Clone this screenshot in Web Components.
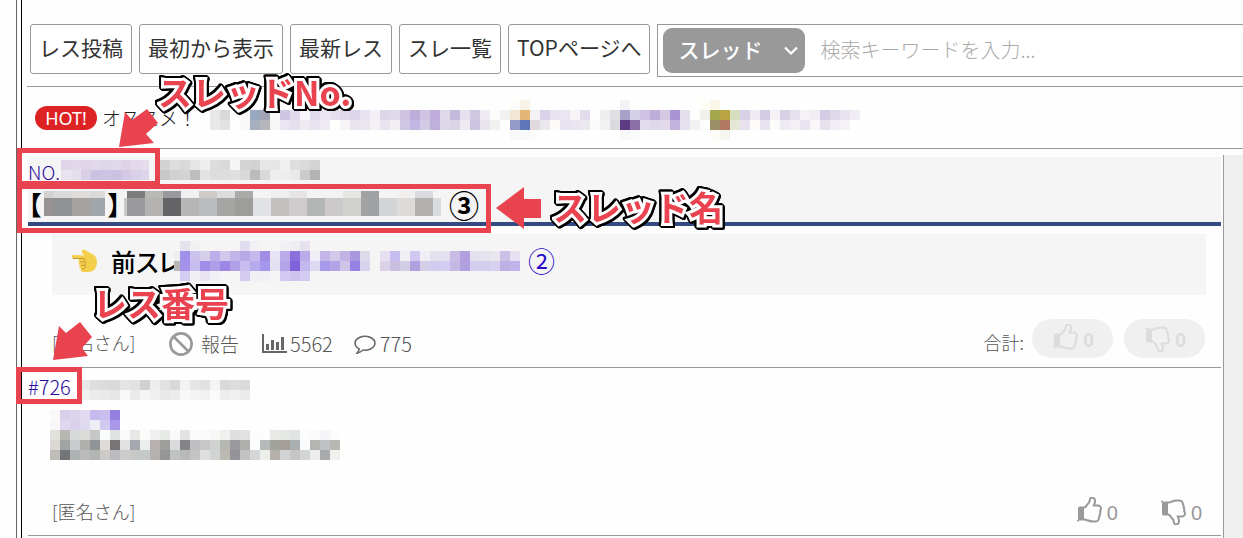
<!DOCTYPE html>
<html lang="ja">
<head>
<meta charset="utf-8">
<meta name="viewport" content="width=device-width, initial-scale=1">
<title>スレッド</title>
<style>
  body { margin: 0; background: #fefefe; color: #555; font-family: "Noto Sans CJK JP", sans-serif; font-weight: 300; }
</style>
</head>
<body>
<board-page></board-page>
<script>
const define = (name, html, setup) => {
  const template = document.createElement('template');
  template.innerHTML = html;
  customElements.define(name, class extends HTMLElement {
    connectedCallback() {
      if (this.shadowRoot) return;
      this.attachShadow({ mode: 'open' }).append(template.content.cloneNode(true));
      if (setup) setup(this, this.shadowRoot);
    }
  });
};

// Censored text: a grid of flat colour cells. Rows are split by "/", "-" is a clear cell.
define('pixel-mosaic', `<style>:host{display:block;flex:none}svg{display:block}</style><svg aria-hidden="true" shape-rendering="crispEdges"></svg>`, (host, root) => {
  const rows = host.getAttribute('cells').split('/').map(r => r.trim().split(/\s+/));
  const n = Math.max(...rows.map(r => r.length));
  const list = (a, length) => {
    const given = (host.getAttribute(a) || '').split(' ').filter(Boolean).map(Number);
    return Array.from({ length }, (_, i) => given[i] ?? 10);
  };
  const ws = list('widths', n), hs = list('heights', rows.length);
  const svg = root.querySelector('svg');
  let y = 0, out = '';
  rows.forEach((r, j) => {
    let x = 0;
    r.forEach((c, i) => {
      if (c !== '-') out += `<rect x="${x}" y="${y}" width="${ws[i]}" height="${hs[j]}" fill="#${c}"/>`;
      x += ws[i];
    });
    y += hs[j];
  });
  svg.setAttribute('width', ws.reduce((a, b) => a + b, 0));
  svg.setAttribute('height', y);
  svg.innerHTML = out;
});

const icons = {
  ban: '<svg viewBox="0 0 24 24" width="24" height="24" fill="none" stroke="#999" stroke-width="2.6"><circle cx="12" cy="12" r="10.6"/><path d="M4.5 4.5l15 15"/></svg>',
  chart: '<svg viewBox="0 0 25 20" width="25" height="20" fill="#666"><path d="M0 0h2v17h23v2H0z"/><path d="M4 10h3v6H4zM9 6h3v10H9zM14 8h3v8h-3zM19 3h3v13h-3z"/></svg>',
  comment: '<svg viewBox="0 128 1792 1664" width="22" height="20" fill="#666"><path d="M896 384q-204 0-381.5 69.5t-282 187.5-104.5 255q0 112 71.5 213.5t201.5 175.5l87 50-27 96q-24 91-70 172 152-63 275-171l43-38 57 6q69 8 130 8 204 0 381.5-69.5t282-187.5 104.5-255-104.5-255-282-187.5-381.5-69.5zm896 512q0 174-120 321.5t-326 233-450 85.5q-70 0-145-8-198 175-460 242-49 14-114 22h-5q-15 0-27-10.5t-16-27.5v-1q-3-4-.5-12t2-10 4.5-9.5l6-9 7-8.5 8-9q7-8 31-34.5t34.5-38 31-39.5 32.5-51 27-59 26-76q-157-89-247.5-220t-90.5-281q0-174 120-321.5t326-233 450-85.5 450 85.5 326 233 120 321.5z"/></svg>',
  thumb: '<svg viewBox="64 0 1728 1792" width="27" height="28" fill="currentColor"><path d="M256 1344q0-26-19-45t-45-19-45 19-19 45 19 45 45 19 45-19 19-45zm1344-768q0-51-39-89.500t-89-38.500h-352q0-58 48-159.500t48-160.500q0-98-32-145t-128-47q-26 26-38 85t-30.500 125.500-59.500 109.500q-22 23-77 91-4 5-23 30t-31.500 41-34.500 42.500-40 44-38.500 35.500-40 27-35.500 9h-32v640h32q13 0 31.500 3t33 6.500 38 11 35 11.500 35.500 12.500 29 10.500q211 73 342 73h121q192 0 192-167 0-26-5-56 30-16 47.500-52.500t17.500-73.500-18-69q53-50 53-119 0-25-10-55.500t-25-47.500q32-1 53.500-47t21.500-81zm128-1q0 89-49 163 9 33 9 69 0 77-38 144 3 21 3 43 0 101-60 178 1 139-85 219.500t-227 80.500h-129q-96 0-189.500-22.500t-216.500-65.500q-116-40-138-40h-288q-53 0-90.500-37.500t-37.500-90.500v-640q0-53 37.500-90.500t90.500-37.500h274q36-24 137-155 58-75 107-128 24-25 35.500-85.500t30.500-126.500 62-108q39-37 90-37 84 0 151 32.500t102 101.500 35 186q0 93-48 192h176q104 0 180 76t76 179z" fill-rule="evenodd" transform="translate(64 160)"/></svg>',
  hand: '<svg viewBox="0 0 28 26" width="28" height="26"><path d="M2 9.500Q1 7 4 7L14 7.500 12 5Q11 1.500 14 1.500L20 5Q27 7 27 14 27 24 17 24L13 24Q10 23.500 11 21 8.500 20 10 17.500 8 16.500 9 14 8 12 9.500 10.800L3.500 10.500Q2.300 10.500 2 9.500Z" fill="#f3cf4c"/><path d="M3 10.500H14Q16 12 14 13.500M10 14H15Q17 15.500 14.500 17M11 17.500H15Q16.500 19 14.500 20.500M12 21H15" fill="none" stroke="#c99a3b" stroke-width="1"/></svg>',
  chevron: '<svg viewBox="0 0 14 10" width="14" height="10" fill="none" stroke="#fff" stroke-width="2.200"><path d="M1 1.500l6 6 6-6"/></svg>'
};
define('ui-icon', '<style>:host{display:block;flex:none}:host([flip]){transform:scaleY(-1)}svg{display:block}</style>', (host, root) => {
  root.append(document.createRange().createContextualFragment(icons[host.getAttribute('name')]));
  root.querySelector('svg').setAttribute('aria-hidden', 'true');
});

define('nav-button', `<style>
  :host{display:block;flex:none}
  button{box-sizing:border-box;height:50px;padding:0 8px 4px;border:1px solid #999;border-radius:3px;background:#fff;color:#333;font:400 21px/30px "Noto Sans CJK JP",sans-serif;white-space:nowrap;display:block}
  </style><button type="button"><slot></slot></button>`);

define('search-box', `<style>
  :host{display:flex;flex:1;min-width:0;box-sizing:border-box;height:53px;padding:3px 0 3px 5px;border:1px solid #999;border-right:0;background:#fff}
  .pick{position:relative;flex:none;width:142px}
  select{appearance:none;width:100%;height:45px;border:0;border-radius:9px;background:#999;color:#fff;padding:0 15px 4px;font:500 21px/30px "Noto Sans CJK JP",sans-serif;display:block}
  ui-icon{position:absolute;right:7px;top:18px;pointer-events:none}
  input{flex:1;min-width:0;border:0;background:none;padding:0 15px 2px;font:300 20px/30px "Noto Sans CJK JP",sans-serif;color:#333;outline:0}
  input::placeholder{color:#aaa;opacity:1}
  </style>
  <div class="pick"><select aria-label="検索対象"><option>スレッド</option></select><ui-icon name="chevron"></ui-icon></div>
  <input type="text" aria-label="検索キーワード" placeholder="検索キーワードを入力...">`);

define('tool-bar', `<style>
  :host{display:flex;align-items:flex-start;gap:7px;padding:24px 0 9px 3px;border-bottom:1px solid #999}
  nav{display:flex;gap:7px}</style>
  <nav><nav-button>レス投稿</nav-button><nav-button>最初から表示</nav-button><nav-button>最新レス</nav-button><nav-button>スレ一覧</nav-button><nav-button>TOPページへ</nav-button></nav>
  <search-box></search-box>`);

define('hot-row', `<style>
  :host{display:flex;align-items:center;height:61px;padding-left:8px;border-bottom:1px solid #999;color:#222;font-size:19px;line-height:24px}
  b{box-sizing:border-box;width:62px;text-align:center;border-radius:12px;background:#dc2222;color:#fff;font:400 18px/24px "Noto Sans",sans-serif}
  span{width:108px;margin-left:5px;white-space:nowrap}
  pixel-mosaic{margin-top:4px}
  </style><b>HOT!</b><span>オススメ！</span>
  <pixel-mosaic cells="
  - - - - - - - - - - - - - - - - - - - - - - - - - - - - - - fefcf8 f9f2e6 - - - - - - - - - f3f3f7 - - - - - - - fdfcf5 faf6e8/
  e8e8e8 d9d9d9 fcfcfc f9f9f9 98a8c0 a2a3b4 f8f8f8 cec6e5 e0daec f7f6fa dfdaec eae6f2 e4e0f0 dfd9ec ddd6ea e7e3f0 f2f0f6 ddd8e9 dfd9eb cec3e3 bcaddb cfc4e4 bfaedc ded8e9 c4b8dc e5e0ed d0c8e3 eeebf3 fcfcfc f1f1f1 f3e6d2 e4b675 f3f1f3 d8d3e9 e9e3f0 e9e5f1 f6f4f7 e2dced fefefe eeeeee e1e0e5 a7a1c7 d3d0e7 cec2e4 beacd9 d3c9e3 a894d3 e3e0eb - f0f1ec a5a74d b8a441 d5dfbd d7d0e6 eeebf3 d4cce4 f4f2f6 d8d1e6 e7e1ed f5f3f5 f1edf4 d3cce4 ddd8ea e7e3ef efecf4/
  e8e8e8 e2e2e2 - f9f9f9 a7b0bf b5b7bd f7f6f7 eae6f1 e5e0ed eeeaf2 e8e2ef efeaf2 fefefa f6f4f7 e9e4ee ebe5ef f3f1f5 e8e3ef f1eef4 d0c7e5 c3b5e2 d3cae6 beafdb ddd7e8 dbd3e6 eeeaf2 cdc4e1 e9e5ef f1f1ef fefefe 949bcb 6076b9 e2d9df ebe7ee fcfbf8 e7e2ef e9e5f0 eae7ef fafafa f3f2f2 dbdade 5d3c84 8c71a7 e3dcec dfd8e9 e2daeb c1b3db e6e1ef f2f2f3 fdfdfb 9c8e66 b17961 e5e7d5 e9e2ee fdfcfa e9e2ef fcfcf8 eeeaf3 f3f0f5 e9e4ef f8f6f9 e7e0ed f0edf4 f5f3f7 -/
  - - - - - - - - - - - - - - - - - - - - - - - - - - - - - - f7faf9 f7faf9 fdfcfc - - - - - - - - f9f8f9 fbfafb - - - - - - - fcfbf7 f7f5ef"></pixel-mosaic>`);

define('thread-head', `<style>
  :host{display:block;background:#f5f5f5;border-bottom:4px solid #354a80}
  .no,h1{display:flex;align-items:flex-start}
  .no{height:30px;padding-top:3px;box-sizing:border-box}
  a{display:flex;width:132px;color:#2b0b9e;text-decoration:none;font-size:19px;line-height:24px}
  a span{width:33px}
  h1{margin:0;height:35px;font:700 26px/34px "Noto Sans CJK JP",sans-serif;color:#000;font-feature-settings:"palt";white-space:nowrap}
  h1 pixel-mosaic{margin:4px 3px 0}
  h1 .count{margin-left:5px;font-size:30px;line-height:34px;font-feature-settings:normal}
  </style>
  <div class="no"><a href="#"><span>NO.</span><pixel-mosaic widths="10 10 10 10 10 10 10 10 8" cells="dfd7e9 e1d9eb ded5e9 e1d8ea ddd5e8 e0d8eb ddd4e8 e2daeb e5ddec/e9e2ef e5deed d8cfe7 cbc1e1 cdc3e2 cac0df d3c9e5 d9d0e7 dcd4e8"></pixel-mosaic></a>
  <pixel-mosaic cells="d3d3d3 dedede d9d9d9 e5e5e5 eeeeee dddddd dadada f5f5f5 d4d4d4 d2d2d2 e7e7e7 e6e6e6 efefef dedede dadada d4d4d4/c9c9c9 d1d1d1 d3d3d3 bebebe e3e3e3 dddddd dedede dfdfdf d9d9d9 bbbbbb d9d9d9 eeeeee ededed e9e9e9 cbcbcb b3b3b3"></pixel-mosaic></div>
  <h1><span>【</span><pixel-mosaic widths="10 18 18 15" heights="7 18" cells="d2d2d0 dbdbdc dfdedb dadada/969293 909193 a5a39f a0a6a9"></pixel-mosaic><span>】</span>
  <pixel-mosaic widths="3 18 18 18 18 18 18 18 18 18 18 18 18 18 18 18 18 18 8" heights="7 18" cells="f5f5f5 7c7c7a b8b8b7 9a9a9e f0f0f0 cecac8 dcdcdc aaaaa8 f4f4f4 eeeeee e7e4e5 f4f4f4 f3f3f3 e7e6e4 a0a1a3 f4f4f4 f1f0ef d9dade f4f4f4/c9c9c9 9b9a9d b3b2b0 646466 b7b6b7 bbbcbe a5a5a3 9d9d9c e0e2e5 c2c1bf cecccd b2b6b4 cbc9c9 d0d1cf a1a2a4 d3d4d5 dcdbda b2b1af d7dcdf"></pixel-mosaic><span class="count">③</span></h1>`);

define('previous-thread', `<style>
  :host{display:flex;align-items:center;height:61px;margin:8px 15px 0 24px;padding:0 0 8px 18px;box-sizing:border-box;background:#f5f5f5;color:#000;font-size:25px;line-height:36px;font-weight:500;white-space:nowrap}
  .label{width:63px;margin-left:13px;font-feature-settings:"palt"}
  a{display:flex;align-items:center;color:#2a0bc8;text-decoration:none;gap:8px;font-size:27px;font-weight:400}
  </style><ui-icon name="hand"></ui-icon><span class="label">前スレ</span>
  <a href="#"><pixel-mosaic widths="6" cells="
  - e5e1ef f1f1f4 - - - - e1dcef f1f0f4 - - f1f0f4 f0eef5 e6e0f0/
  eeeeee a190e9 cbc3ee d6cfec bbaeea d2c7ec c1b4e9 b8a9e5 c4b9ee a18ce6 e6e4f4 baaae8 8b6fdc baace8 f0edf7 c5b4e7 d0c9e9 c3b3e5 a998e0 dcdbea - e6e0f1 c6bdf0 f0eff4 d0c8f0 efeef5 e4e1ef e4e0ef c8bce7 b19fdf e4e1ee e6e2ee e9e6f0 cbc1e7 e5dff0/
  b7b7b7 a491e9 c7bdf0 a08eea af9ee9 9e87e4 afa0e7 c7bdee b6aaeb a398ee e3e0f2 b3a5e7 7f61d9 c4b9ee dedaf2 a79aeb b4a3e6 cec5e7 9681e5 d8d4ee - dbd1e8 cabfe1 d3cee6 b0a0de d5cee7 d2ccf1 d3cdf2 c6b8e5 b0a0e0 d5cef0 d3cdf0 d7d1ef bfb0e4 c0b2eb/
  - d5ccf1 f0f0f4 e9e4f2 f1f0f4 - - d4cbf0 f0f0f4 f0f0f4 - d3caf1 cfc3ed d4ccf0"></pixel-mosaic><span>②</span></a>`);

define('vote-button', `<style>
  :host{display:block;flex:none}
  button{display:flex;align-items:center;gap:5px;height:39px;padding:0;border:0;background:none;color:#999;font:400 20px/24px "Liberation Sans",sans-serif}
  span{padding-top:4px}
  :host([pill]) button{width:81px;padding:0 19px;border-radius:20px;background:#f0f0f0;color:#dcdcdc;font-weight:700}
  </style><button type="button"><ui-icon name="thumb"></ui-icon><span>0</span></button>`, (host, root) => {
  const down = host.hasAttribute('down');
  root.querySelector('ui-icon').toggleAttribute('flip', down);
  root.querySelector('button').setAttribute('aria-label', down ? 'よくない 0' : 'いいね 0');
});

define('post-footer', `<style>
  :host{display:flex;align-items:center;box-sizing:border-box;padding:0 16px 0 24px;border-bottom:1px solid #999;font-size:19px;line-height:24px;color:#555;white-space:nowrap}
  .name{width:117px;padding-top:var(--text-drop,0);font-size:18px}
  .votes{display:flex;align-items:center;margin-left:auto}
  </style><span class="name">[匿名さん]</span><slot></slot><div class="votes"><slot name="votes"></slot></div>`);

define('post-stats', `<style>
  :host{display:flex;align-items:center;padding-top:12px}
  a,span{display:flex;align-items:center;color:inherit;text-decoration:none}
  a{gap:8px;margin-right:23px}.views{gap:3px;margin-right:21px;font-size:20px}.replies{gap:4px;font-size:20px}
  </style><a href="#"><ui-icon name="ban"></ui-icon>報告</a><span class="views"><ui-icon name="chart"></ui-icon>5562</span><span class="replies"><ui-icon name="comment"></ui-icon>775</span>`);

define('reply-post', `<style>
  :host{display:block}
  header{display:flex;height:42px}
  a{width:52px;color:#2b0b9e;text-decoration:none;font-size:20px;line-height:38px}
  header pixel-mosaic{margin-top:12px}
  .body{margin-left:22px}
  </style><header><a href="#">#726</a>
  <pixel-mosaic cells="e8e8e8 dedede dcdcdc dadada e4e4e4 e1e1e1 d1d1d1 ededed e2e2e2 d8d8d8 f3f3f3 e5e5e5 e1e1e1 f4f4f4 d9d9d9 dddddd dadada/f0f0f0 ececec eaeaea e7e7e7 f8f8f8 ebebeb f4f4f4 efefef e9e9e9 ececec f8f8f8 f4f4f4 f1f1f1 fafafa ededed f0f0f0 ebebeb"></pixel-mosaic></header>
  <pixel-mosaic class="body" cells="
  faf8f9 d9cfeb dcd3ec e1daf0 c5b9ed c9bef0 9580df/
  f8f6f8 ded7ed d9d0eb e0daf0 ecedf5 d2c9f0 a998ea/
  e0e2dc b7b7b2 d7dad9 dbdcd8 c5c8c7 fafcfb e0e3e2 fafafa e6e8e5 fbfbfa f0eff0 e7eae5 f9faf9 e2e4e3 fafafa fafafa f7f7f6 f0f1ef dedfde e0e1e0 fcfcfc fdfdfd e8e9e4 e6e8e3 dfe4e2 fbfcfc fafafa f5f5f7 fcfcfb/
  dcd8d3 a0a4a3 c8ccce b0b0ae 909598 dedbd8 777475 e1e1e1 a6a8af ededed b6b1b0 9e9e9d d9dcda 858589 bfbfc1 c7c7c8 d0d3d1 b4b7b2 9b9a9c b0b1ae fcfcfc b5b9b7 a2a39c a39e97 aab0b1 fafcfb b4b5b0 c0c1c5 b7b7b3/
  c0bdb8 747578 adb3b2 bababa b3b5b2 cdc9c7 babbbe cecbcb c7c9c9 c3c8c8 b5b1af 969697 bfc3c3 b8bab8 c3c5c2 e1dfdd d0d4d2 bcb8b2 939399 c1c3c2 d4d6d7 eceeea b6b1aa d1d3d4 c8c6c3 d2d7d4 eceeed a9aaab f0f0ec"></pixel-mosaic>
  <slot></slot>`);

define('callout-label', `<style>
  :host{position:absolute;color:#e8434f;font-size:34px;line-height:40px;font-weight:700;white-space:nowrap;-webkit-text-stroke:6px #fff;paint-order:stroke fill;
  filter:drop-shadow(1px 0 #000) drop-shadow(-1px 0 #000) drop-shadow(0 1px #000) drop-shadow(0 -1px #000) drop-shadow(1px 1px #000) drop-shadow(-1px -1px #000)}
  </style><slot></slot>`);

// Explanatory frames, arrows and captions laid over the board.
define('callout-layer', `<style>
  :host{position:absolute;inset:0;pointer-events:none;overflow:hidden}
  .box{position:absolute;box-sizing:border-box;border:5px solid #e8434f}
  .number{left:17px;top:148px;width:143px;height:38px}
  .title{left:17px;top:184px;width:474px;height:49px}
  .reply{left:16px;top:367px;width:66px;height:37px}
  svg{position:absolute;left:0;top:0}
  .a{left:158px;top:72px}.b{left:553px;top:187px}.c{left:93px;top:283px}
  </style>
  <div class="box number"></div><div class="box title"></div><div class="box reply"></div>
  <svg width="560" height="380" fill="#e8434f" aria-hidden="true"><path d="M119 147l6-35 7 8 15-11 11 14-12 11 8 9zM496 208l28-21v12h17v19h-17v11zM53 360l6-34 7 7 14-11 12 15-10 11 6 8z"/></svg>
  <callout-label class="a">スレッドNo.</callout-label><callout-label class="b">スレッド名</callout-label><callout-label class="c">レス番号</callout-label>`);

define('board-page', `<style>
  :host{display:flex;position:relative;min-height:100vh;padding-left:16px;overflow:hidden;box-sizing:border-box}
  .frame{flex:1;min-width:0;display:flex;border-left:1px solid #666;padding-left:4px}
  main{flex:1;min-width:0;display:flex;flex-direction:column;border-left:1px solid #000;padding-left:5px}
  .columns{flex:1;display:grid;grid-template-columns:minmax(0,1fr) 20px;gap:2px;margin:6px 0 0 1px}
  .thread{padding-top:2px}
  aside{box-sizing:border-box;border-left:1px solid #999;background:#f0f0f0}
  .first{--text-drop:8px;height:73px;padding-top:14px}
  .last{height:76px;padding-top:26px;padding-right:19px}
  .total{font-size:18px;margin-right:8px;padding-top:8px}
  .first vote-button+vote-button{margin-left:11px}
  .last vote-button+vote-button{margin-left:41px}
  </style>
  <div class="frame"><main><tool-bar></tool-bar><hot-row></hot-row>
  <div class="columns"><div class="thread"><thread-head></thread-head><previous-thread></previous-thread>
  <post-footer class="first"><post-stats></post-stats><span class="total" slot="votes">合計:</span><vote-button slot="votes" pill></vote-button><vote-button slot="votes" pill down></vote-button></post-footer>
  <reply-post><post-footer class="last"><vote-button slot="votes"></vote-button><vote-button slot="votes" down></vote-button></post-footer></reply-post>
  </div><aside></aside></div></main></div>
  <callout-layer></callout-layer>`);
</script>
</body>
</html>
